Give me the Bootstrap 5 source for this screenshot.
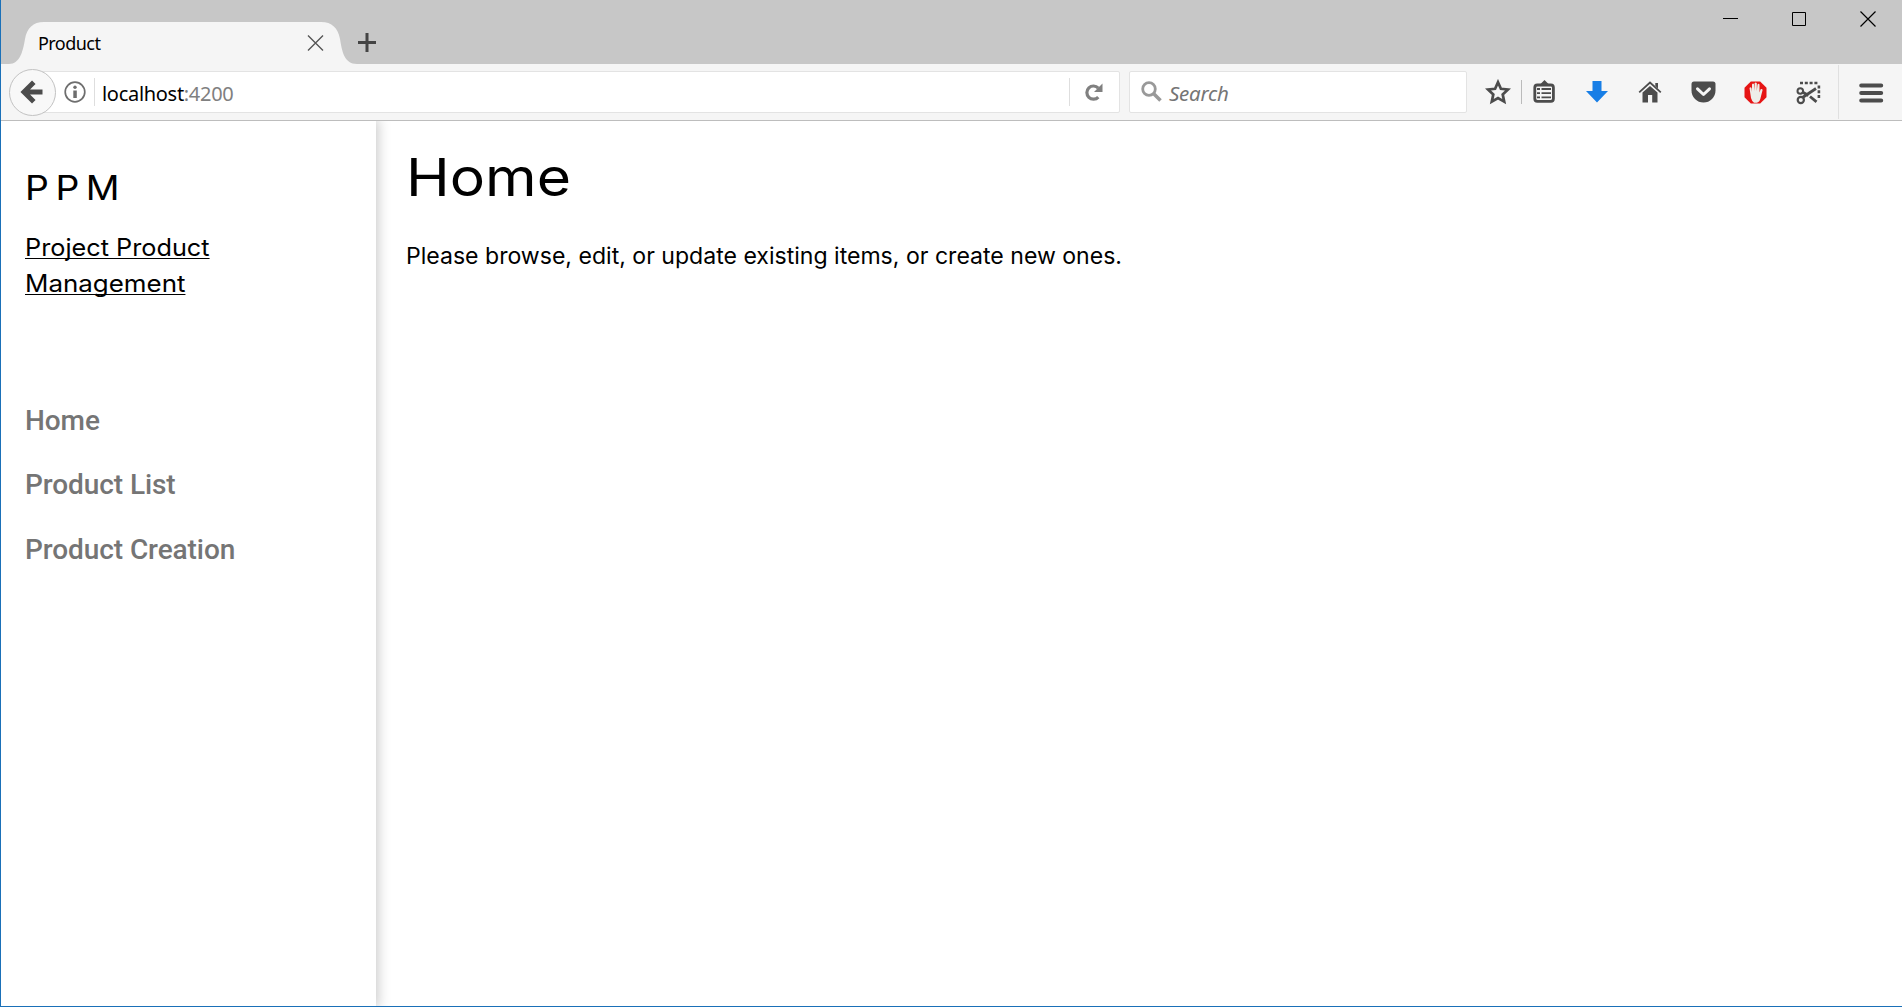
<!DOCTYPE html>
<html lang="en">
<head>
<meta charset="utf-8">
<title>Product</title>
<link href="https://cdn.jsdelivr.net/npm/bootstrap@5.3.0/dist/css/bootstrap.min.css" rel="stylesheet">
<style>
body{height:1007px;overflow:hidden;color:#000;background:#fff;font-family:Inter,sans-serif}
.win{height:1007px;border-left:1px solid #1a70b8;border-bottom:1px solid #1a70b8}
.ui{font-family:"Noto Sans",sans-serif}
svg{display:block;flex:none}
.strip{height:64px;background:#c7c7c7}
.ff-tab{width:350px;height:42px;margin-top:22px;padding:0 35px 0 29px}
.tab-bg{left:0;top:0}
.tab-label{font-size:18px;letter-spacing:-.55px;line-height:24px}
.plus{margin:33px 0 0 -1px}
.wbtns{margin-left:auto;padding:11px 25px 0 0;gap:53px}
.tools{height:57px;background:#f5f5f5;border-bottom:1px solid #bdbdbd;padding-top:7px}
.urlbox{width:1088px;height:42px;margin-left:31px;border:1px solid #e3e3e3;border-radius:2px}
.back{left:8px;top:5px}
.vline{width:1px;height:28px;background:#dedede}
.url{font-size:20px;line-height:28px;letter-spacing:-.3px;padding-top:3px}
.url span{color:#808080}
.findbox{width:338px;height:42px;margin-left:9px;border:1px solid #e3e3e3;border-radius:2px;padding-left:11px}
.find-label{font-size:20.5px;font-style:italic;line-height:28px;color:#757575;letter-spacing:-.25px;margin-left:7px;padding-top:2px}
.icons{color:#4c4c4c}
.side{width:375px;padding:43px 24px 0 24px;box-shadow:0 0 12px 2px rgba(0,0,0,.22);z-index:1}
.clipbox{overflow:hidden}
.wide{display:inline-block;transform-origin:0 50%}
.brand{font-size:34px;line-height:48px;letter-spacing:5.9px;font-weight:400;margin:0}
.brand .wide{transform:scaleX(1.1)}
.sub{font-size:24px;line-height:36px;margin:18px 0 0}
.sub .wide{text-decoration:underline;text-decoration-thickness:1px;text-underline-offset:2px;text-decoration-skip-ink:none}
.s1{transform:scaleX(1.053)}
.s2{transform:scaleX(1.08)}
.menu{margin-top:87px}
.menu a{font:500 28px/64.4px Roboto,sans-serif;letter-spacing:-.08px;color:#757575;text-decoration:none;display:block}
.body-pane{padding:22px 0 0 30px}
.title{font-size:52.5px;line-height:68px;font-weight:400;margin:0}
.title .wide{transform:scaleX(1.122)}
.intro{font-size:22.5px;line-height:32px;margin:29px 0 0;white-space:nowrap}
.intro .wide{transform:scaleX(1.025)}
</style>
</head>
<body>
<div class="win d-flex flex-column">
  <div class="strip ui d-flex align-items-start">
    <div class="ff-tab position-relative d-flex align-items-center justify-content-between ms-2">
      <svg class="tab-bg position-absolute" width="350" height="42"><path fill="#f5f5f5" d="M0 42C11 42 14 29 16 17C18 6 24 0 35 0H312C323 0 329 6 331 17C333 29 335 42 348 42Z"/></svg>
      <span class="tab-label position-relative">Product</span>
      <svg class="position-relative" width="17" height="17" stroke="#555" stroke-width="1.4"><path d="M1 .5L16 15.5M16 .5L1 15.5"/></svg>
    </div>
    <svg class="plus" width="19" height="19" stroke="#444" stroke-width="3"><path d="M0 9.5H18M9 0V19"/></svg>
    <div class="wbtns d-flex">
      <svg width="16" height="16" stroke="#000"><path d="M0 7.5H15"/></svg>
      <svg width="15" height="16" fill="none" stroke="#000"><path d="M.5 1.5H13.5V14.5H.5Z"/></svg>
      <svg width="17" height="17" stroke="#000" stroke-width="1.2"><path d="M.5 .5L15.5 15.5M15.5 .5L.5 15.5"/></svg>
    </div>
  </div>
  <div class="tools ui position-relative d-flex align-items-start">
    <svg class="back position-absolute" width="48" height="48"><circle cx="23.5" cy="23.5" r="23" fill="#f8f8f8" stroke="#c2c2c2"/><path d="M33.5 23H16M24.8 13.2L15 23L24.8 32.8" fill="none" stroke="#4c4c4c" stroke-width="5"/></svg>
    <div class="urlbox bg-white d-flex align-items-center">
      <svg style="margin-left:31px" width="22" height="22"><circle cx="11" cy="11" r="9.8" fill="none" stroke="#6e6e6e" stroke-width="1.7"/><path d="M9.3 9.5H12.8V17H9.3Z" fill="#6e6e6e"/><circle cx="11" cy="6.3" r="1.7" fill="#6e6e6e"/></svg>
      <div class="vline" style="margin-left:8px"></div>
      <div class="url" style="margin-left:7px">localhost<span>:4200</span></div>
      <div class="vline ms-auto"></div>
      <svg style="margin:0 16px 0 15px" width="18" height="18"><path d="M13.3 14.1A6.6 6.6 0 1 1 13.3 5.1" fill="none" stroke="#808080" stroke-width="3.2"/><path d="M17.5 .5V9H9Z" fill="#808080"/></svg>
    </div>
    <div class="findbox bg-white d-flex align-items-center">
      <svg width="21" height="22" fill="none" stroke="#999"><circle cx="8" cy="8" r="6.3" stroke-width="2.8"/><path d="M12.5 12.5L19.5 19.5" stroke-width="3.6"/></svg>
      <div class="find-label">Search</div>
    </div>
    <div class="icons d-flex align-items-center" style="height:42px;margin-left:18px">
      <svg width="26" height="26"><path d="M13 3.2L15.9 9.8L23 10.5L17.7 15.4L19.2 22.6L13 19L6.8 22.6L8.3 15.4L3 10.5L10.1 9.8Z" fill="none" stroke="currentColor" stroke-width="2.7" stroke-linejoin="miter"/></svg>
      <div style="width:1px;height:24px;background:#bbb;margin-left:10px"></div>
      <svg style="margin-left:11px" width="23" height="24"><path d="M11.5 0L16 4.5H7Z" fill="currentColor"/><rect x="1.8" y="5" width="18.6" height="16.3" rx="2.5" fill="none" stroke="currentColor" stroke-width="2.8"/><path d="M4 9H7M8.5 9H18M4 13.2H7M8.5 13.2H18M4 17.4H7M8.5 17.4H18" stroke="currentColor" stroke-width="1.8"/></svg>
      <svg style="margin-left:30px" width="22" height="22"><path d="M6.5 0H15.5V10H22L11 21.5L0 10H6.5Z" fill="#177ee6"/></svg>
      <svg style="margin-left:30px" width="24" height="24"><path d="M1.2 12.3L12 2.5L22.8 12.3" fill="none" stroke="currentColor" stroke-width="1.8"/><path d="M17.3 3H20V8.5L17.3 6Z" fill="currentColor"/><path d="M4.5 12.5L12 6L19.5 12.5V22.5H14.2V15H10V22.5H4.5Z" fill="currentColor"/></svg>
      <svg style="margin-left:29px" width="25" height="24"><path d="M3 1.5H22Q24.5 1.5 24.5 4V10.5A12 12 0 0 1 .5 10.5V4Q.5 1.5 3 1.5Z" fill="currentColor"/><path d="M6.5 8.8L12.5 14.5L18.5 8.8" fill="none" stroke="#f5f5f5" stroke-width="3" stroke-linecap="round" stroke-linejoin="round"/></svg>
      <svg style="margin-left:28px" width="23" height="23"><path d="M6.8 .5H16.2L22.5 6.8V16.2L16.2 22.5H6.8L.5 16.2V6.8Z" fill="#e61414"/><path d="M5.5 7Q6.5 5.7 7.5 7L8 11V3.5Q9 1.8 10 3.3L10.5 10L10.6 2.3Q11.7 .9 12.8 2.3V10L13.5 3.5Q14.7 2.2 15.5 3.6V11.5L16.6 8.3Q18.2 7.3 18.6 9L16.8 16Q16 21 13 21.7H10Q8 20.6 7 17Z" fill="#eeeeea"/></svg>
      <svg style="margin-left:29px" width="25" height="25" fill="none" stroke="currentColor"><path d="M4 3H22" stroke-width="2.6" stroke-dasharray="3 1.8"/><path d="M22.9 5.5V18" stroke-width="2.6" stroke-dasharray="3 1.8"/><path d="M6.5 17.5L20 8.5M6 11.8L12.5 15.5M14 16.5L20.5 21.8" stroke-width="2.8"/><circle cx="4.3" cy="11" r="2.8" stroke-width="2"/><circle cx="4.8" cy="20" r="3.1" stroke-width="2.2"/></svg>
    </div>
    <div style="width:1px;height:54px;background:#e0e0e0;margin:-6px 0 0 17px"></div>
    <svg style="margin:12px 0 0 20px" width="25" height="21" stroke="#4c4c4c" stroke-width="4" stroke-linecap="round"><path d="M2.2 2.5H22.2M2.2 10H22.2M2.2 17.5H22.2"/></svg>
  </div>
  <div class="clipbox d-flex flex-grow-1">
    <div class="side bg-white flex-shrink-0">
      <h2 class="brand"><span class="wide">PPM</span></h2>
      <p class="sub"><span class="wide s1">Project Product</span><br><span class="wide s2">Management</span></p>
      <nav class="menu"><a href="#">Home</a><a href="#">Product List</a><a href="#">Product Creation</a></nav>
    </div>
    <main class="body-pane">
      <h1 class="title"><span class="wide">Home</span></h1>
      <p class="intro"><span class="wide">Please browse, edit, or update existing items, or create new ones.</span></p>
    </main>
  </div>
</div>
<script src="https://cdn.jsdelivr.net/npm/bootstrap@5.3.0/dist/js/bootstrap.bundle.min.js"></script>
</body>
</html>
